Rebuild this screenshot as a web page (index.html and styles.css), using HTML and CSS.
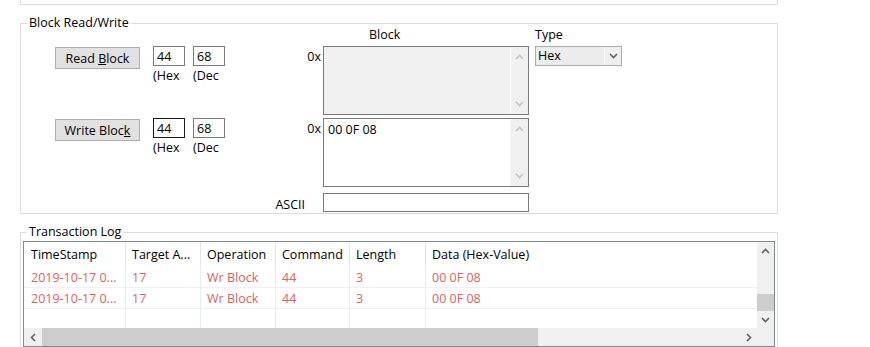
FILE: index.html
```html
<!DOCTYPE html>
<html lang="en">
<head>
    <meta charset="UTF-8">
    <title>Block Read/Write</title>
    <link rel="stylesheet" href="styles.css">
</head>
<body>
    <div class="page">
        <div class="group stub"></div>

        <section class="group blockrw">
            <span class="legend">Block Read/Write</span>
            <div class="block-grid">
                <div class="head-block">Block</div>
                <div class="head-type">Type</div>

                <div class="cmd"><button class="btn">Read <u>B</u>lock</button></div>
                <div class="addr">
                    <input class="num" type="text" value="44">
                    <input class="num" type="text" value="68">
                    <span class="unit">(Hex</span>
                    <span class="unit">(Dec</span>
                </div>
                <div class="prefix">0x</div>
                <div class="memo disabled">
                    <div class="memo-text"></div>
                    <div class="vscroll">
                        <span class="sbtn tall"><svg width="9" height="6" viewBox="0 0 9 6"><polyline points="1,5 4.5,1.5 8,5"/></svg></span>
                        <span class="strack"></span>
                        <span class="sbtn tall"><svg width="9" height="6" viewBox="0 0 9 6"><polyline points="1,1 4.5,4.5 8,1"/></svg></span>
                    </div>
                </div>
                <div class="type-cell">
                    <div class="combo">
                        <span class="combo-text">Hex</span>
                        <span class="combo-btn"><svg width="9" height="6" viewBox="0 0 9 6"><polyline points="1,1 4.5,4.5 8,1"/></svg></span>
                    </div>
                </div>

                <div class="cmd"><button class="btn">Write Bloc<u>k</u></button></div>
                <div class="addr">
                    <input class="num focused" type="text" value="44">
                    <input class="num" type="text" value="68">
                    <span class="unit">(Hex</span>
                    <span class="unit">(Dec</span>
                </div>
                <div class="prefix">0x</div>
                <div class="memo">
                    <div class="memo-text">00 0F 08</div>
                    <div class="vscroll">
                        <span class="sbtn tall"><svg width="9" height="6" viewBox="0 0 9 6"><polyline points="1,5 4.5,1.5 8,5"/></svg></span>
                        <span class="strack"></span>
                        <span class="sbtn tall"><svg width="9" height="6" viewBox="0 0 9 6"><polyline points="1,1 4.5,4.5 8,1"/></svg></span>
                    </div>
                </div>
                <div></div>

                <div class="prefix ascii-label">ASCII</div>
                <input class="ascii" type="text" value="">
            </div>
        </section>

        <section class="group log">
            <span class="legend">Transaction Log</span>
            <div class="listview">
                <div class="list-body">
                    <div class="lv-row lv-head">
                        <div class="cell">TimeStamp</div>
                        <div class="cell">Target A...</div>
                        <div class="cell">Operation</div>
                        <div class="cell">Command</div>
                        <div class="cell">Length</div>
                        <div class="cell">Data (Hex-Value)</div>
                    </div>
                    <div class="lv-row lv-item">
                        <div class="cell">2019-10-17 0...</div>
                        <div class="cell">17</div>
                        <div class="cell">Wr Block</div>
                        <div class="cell">44</div>
                        <div class="cell">3</div>
                        <div class="cell">00 0F 08</div>
                    </div>
                    <div class="lv-row lv-item">
                        <div class="cell">2019-10-17 0...</div>
                        <div class="cell">17</div>
                        <div class="cell">Wr Block</div>
                        <div class="cell">44</div>
                        <div class="cell">3</div>
                        <div class="cell">00 0F 08</div>
                    </div>
                    <div class="lv-row lv-item lv-empty">
                        <div class="cell"></div>
                        <div class="cell"></div>
                        <div class="cell"></div>
                        <div class="cell"></div>
                        <div class="cell"></div>
                        <div class="cell"></div>
                    </div>
                </div>
                <div class="vscroll dark">
                    <span class="sbtn"><svg width="9" height="6" viewBox="0 0 9 6"><polyline points="1,5 4.5,1.5 8,5"/></svg></span>
                    <span class="strack"></span>
                    <span class="sthumb"></span>
                    <span class="sbtn"><svg width="9" height="6" viewBox="0 0 9 6"><polyline points="1,1 4.5,4.5 8,1"/></svg></span>
                </div>
                <div class="hscroll dark">
                    <span class="sbtn"><svg width="6" height="9" viewBox="0 0 6 9"><polyline points="5,1 1.5,4.5 5,8"/></svg></span>
                    <span class="htrack"><span class="hthumb"></span></span>
                    <span class="sbtn"><svg width="6" height="9" viewBox="0 0 6 9"><polyline points="1,1 4.5,4.5 1,8"/></svg></span>
                </div>
                <div class="corner"></div>
            </div>
        </section>
    </div>
</body>
</html>
```

FILE: styles.css
```css
body {
    margin: 0;
    background-color: white;
    font-family: "Open Sans", "Noto Sans", sans-serif;
    font-size: 12.5px;
    color: #000;
}
.page {
    padding-left: 20px;
    width: 758px;
}
.group {
    border: 1px solid #dcdcdc;
    position: relative;
}
.stub {
    height: 4px;
    border-top: none;
}
.legend {
    position: absolute;
    top: -9px;
    left: 6px;
    padding: 0 2px;
    line-height: 16px;
    background-color: white;
}
.blockrw {
    margin-top: 18px;
    padding: 4px 0 1px 34px;
}
.block-grid {
    display: grid;
    grid-template-columns: 98px 72px 98px 206px 93px;
    grid-template-rows: 18px 72px 75px 19px;
    align-items: start;
}
.head-block {
    grid-column: 4;
    margin-left: 46px;
    line-height: 14px;
}
.head-type {
    grid-column: 5;
    margin-left: 6px;
    line-height: 14px;
}
.btn {
    width: 85px;
    height: 22px;
    margin-top: 1px;
    padding: 0;
    border: 1px solid #adadad;
    background-color: #e1e1e1;
    font: inherit;
    color: #000;
}
.addr {
    display: grid;
    grid-template-columns: 32px 32px;
    column-gap: 8px;
    row-gap: 2px;
}
.num {
    width: 32px;
    height: 20px;
    box-sizing: border-box;
    border: 1px solid #7a7a7a;
    padding: 0 3px;
    font: inherit;
    line-height: 16px;
    outline: none;
}
.num.focused {
    border-color: #1a1a1a;
}
.unit {
    white-space: nowrap;
    line-height: 15px;
}
.prefix {
    text-align: right;
    padding: 4px 2px 0 0;
    line-height: 14px;
}
.ascii-label {
    grid-column: 3;
    padding: 5px 18px 0 0;
}
.memo {
    width: 206px;
    height: 69px;
    box-sizing: border-box;
    border: 1px solid #7a7a7a;
    display: flex;
    background-color: white;
}
.memo.disabled {
    background-color: #f0f0f0;
}
.memo-text {
    flex: 1;
    padding: 4px 4px;
    line-height: 14px;
}
.vscroll {
    width: 17px;
    display: flex;
    flex-direction: column;
    background-color: #f0f0f0;
}
.memo .vscroll {
    border-left: 1px solid #fafafa;
}
.sbtn {
    width: 17px;
    height: 17px;
    display: flex;
    align-items: center;
    justify-content: center;
    flex-shrink: 0;
}
.sbtn.tall {
    height: 20px;
}
.strack {
    flex: 1;
}
.sbtn svg polyline,
.combo-btn svg polyline {
    fill: none;
    stroke: #c4c4c4;
    stroke-width: 1.6;
}
.dark .sbtn svg polyline,
.combo-btn svg polyline {
    stroke: #606060;
}
.type-cell {
    padding-left: 6px;
}
.combo {
    width: 87px;
    height: 20px;
    box-sizing: border-box;
    border: 1px solid #acacac;
    background-color: #ececec;
    display: flex;
}
.combo-text {
    flex: 1;
    padding-left: 2px;
    line-height: 18px;
}
.combo-btn {
    width: 16px;
    border-left: 1px solid #f8f8f8;
    background-color: #efefef;
    display: flex;
    align-items: center;
    justify-content: center;
}
.ascii {
    grid-column: 4;
    width: 206px;
    height: 19px;
    box-sizing: border-box;
    border: 1px solid #7a7a7a;
    padding: 0 3px;
    font: inherit;
    outline: none;
}
.log {
    margin-top: 18px;
    padding: 8px 2px 6px 2px;
}
.listview {
    height: 106px;
    box-sizing: border-box;
    border: 1px solid #828790;
    display: grid;
    grid-template-columns: 1fr 17px;
    grid-template-rows: 86px 18px;
}
.list-body {
    overflow: hidden;
}
.lv-row {
    display: grid;
    grid-template-columns: 102px 75px 75px 74px 76px 650px;
    width: 1052px;
}
.cell {
    box-sizing: border-box;
    padding-left: 6px;
    white-space: nowrap;
    overflow: hidden;
}
.lv-head .cell {
    height: 25px;
    line-height: 26px;
    border-right: 1px solid #e5e5e5;
}
.lv-head .cell:first-child {
    padding-left: 7px;
}
.lv-item .cell {
    height: 21px;
    line-height: 21px;
    color: #e0625c;
    border-right: 1px solid #e6edf7;
    border-bottom: 1px solid #f0f0f0;
}
.lv-item .cell:first-child {
    padding-left: 7px;
}
.lv-empty .cell {
    border-bottom: none;
}
.vscroll.dark .sthumb {
    height: 17px;
    background-color: #cdcdcd;
}
.hscroll {
    display: flex;
    background-color: #f0f0f0;
}
.hscroll .sbtn {
    height: 18px;
}
.htrack {
    flex: 1;
    display: flex;
}
.hthumb {
    width: 496px;
    margin-left: 1px;
    background-color: #cdcdcd;
}
.corner {
    background-color: #f0f0f0;
}
```
